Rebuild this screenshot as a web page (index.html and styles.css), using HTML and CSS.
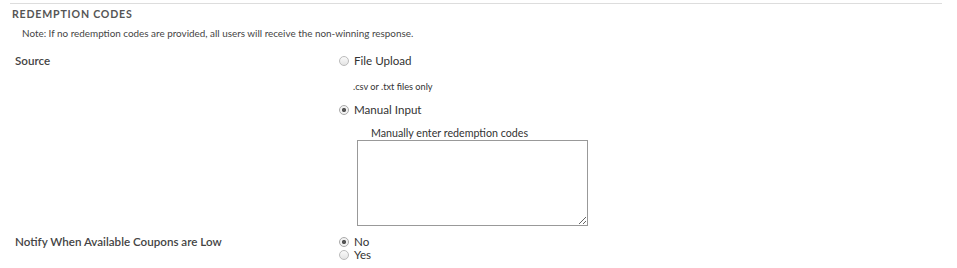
FILE: index.html
```html
<!DOCTYPE html>
<html>
<head>
    <title>Redemption Codes</title>
    <link rel="stylesheet" href="styles.css">
</head>
<body>
    <div class="section">
        <h4 class="section-title">REDEMPTION CODES</h4>
        <p class="note">Note: If no redemption codes are provided, all users will receive the non-winning response.</p>

        <div class="row">
            <div class="label">Source</div>
            <div class="field">
                <label class="radio"><input type="radio" name="source"> File Upload</label>
                <div class="hint">.csv or .txt files only</div>
                <label class="radio"><input type="radio" name="source" checked> Manual Input</label>
                <div class="manual">
                    <div class="manual-label">Manually enter redemption codes</div>
                    <textarea class="codes"></textarea>
                </div>
            </div>
        </div>

        <div class="row row-notify">
            <div class="label">Notify When Available Coupons are Low</div>
            <div class="field">
                <label class="radio"><input type="radio" name="notify" checked> No</label>
                <label class="radio"><input type="radio" name="notify"> Yes</label>
            </div>
        </div>
    </div>
</body>
</html>
```

FILE: styles.css
```css
body {
    margin: 0;
    padding: 3px 15px 0 10px;
    font-family: Lato, "Open Sans", sans-serif;
    color: #444;
    background: #fff;
}

.section {
    border-top: 1px solid #ddd;
}

.section-title {
    margin: 4px 0 0 2px;
    font-size: 10.6px;
    font-weight: bold;
    letter-spacing: 0.8px;
    color: #555;
}

.note {
    margin: 7px 0 0 12px;
    font-size: 9.9px;
    color: #444;
}

.row {
    display: flex;
    margin-top: 15px;
}

.label {
    width: 324px;
    padding-left: 5px;
    font-size: 11.6px;
    font-weight: 600;
    color: #444;
}

.field {
    display: flex;
    flex-direction: column;
}

.radio {
    display: flex;
    align-items: center;
    gap: 5px;
    font-size: 11.6px;
    color: #333;
    line-height: 13px;
}

.radio input {
    appearance: none;
    -webkit-appearance: none;
    margin: 0;
    width: 10px;
    height: 10px;
    border: 1px solid #bbb;
    border-radius: 50%;
    background: linear-gradient(#fafafa, #e4e4e4);
    box-sizing: border-box;
}

.radio input:checked {
    background: radial-gradient(circle, #555 0 1.8px, #f2f2f2 2.4px);
    border-color: #aaa;
}

.hint {
    margin: 14px 0 11px 14px;
    font-size: 9.2px;
    color: #333;
}

.manual {
    margin: 11px 0 0 18px;
}

.manual-label {
    margin-left: 14px;
    font-size: 10.7px;
    color: #333;
    line-height: 12px;
}

.codes {
    display: block;
    width: 231px;
    height: 86px;
    margin: 1px 0 0;
    border: 1px solid #999;
    box-sizing: border-box;
    resize: both;
}

.row-notify {
    margin-top: 9px;
}
```
